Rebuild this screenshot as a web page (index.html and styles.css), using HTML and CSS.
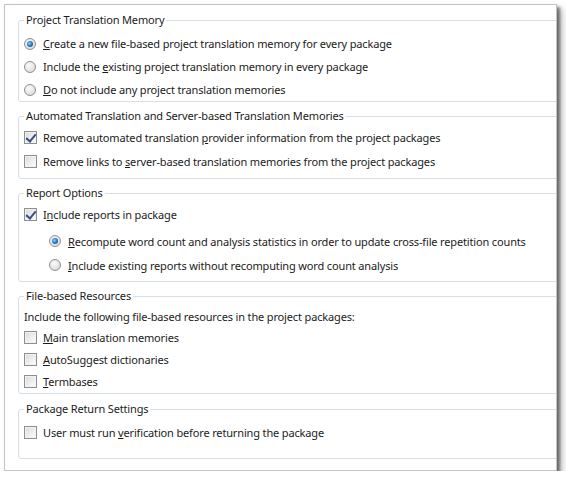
FILE: index.html
```html
<!DOCTYPE html>
<html lang="en">
<head>
  <meta charset="UTF-8">
  <title>Project Package Options</title>
  <link rel="stylesheet" href="styles.css">
</head>
<body>
  <div class="window">
    <fieldset class="group g1">
      <legend>Project Translation Memory</legend>
      <label class="opt"><span class="radio checked"></span><span><u>C</u>reate a new file-based project translation memory for every package</span></label>
      <label class="opt"><span class="radio"></span><span>Include the <u>e</u>xisting project translation memory in every package</span></label>
      <label class="opt"><span class="radio"></span><span><u>D</u>o not include any project translation memories</span></label>
    </fieldset>

    <fieldset class="group g2">
      <legend>Automated Translation and Server-based Translation Memories</legend>
      <label class="opt"><span class="check checked"></span><span>Remove automated translation <u>p</u>rovider information from the project packages</span></label>
      <label class="opt"><span class="check"></span><span>Remove links to <u>s</u>erver-based translation memories from the project packages</span></label>
    </fieldset>

    <fieldset class="group g3">
      <legend>Report Options</legend>
      <label class="opt"><span class="check checked"></span><span>I<u>n</u>clude reports in package</span></label>
      <div class="sub">
        <label class="opt"><span class="radio checked"></span><span><u>R</u>ecompute word count and analysis statistics in order to update cross-file repetition counts</span></label>
        <label class="opt"><span class="radio"></span><span><u>I</u>nclude existing reports without recomputing word count analysis</span></label>
      </div>
    </fieldset>

    <fieldset class="group g4">
      <legend>File-based Resources</legend>
      <div class="note">Include the following file-based resources in the project packages:</div>
      <label class="opt"><span class="check"></span><span><u>M</u>ain translation memories</span></label>
      <label class="opt"><span class="check"></span><span><u>A</u>utoSuggest dictionaries</span></label>
      <label class="opt"><span class="check"></span><span><u>T</u>ermbases</span></label>
    </fieldset>

    <fieldset class="group g5">
      <legend>Package Return Settings</legend>
      <label class="opt"><span class="check"></span><span>User must run <u>v</u>erification before returning the package</span></label>
    </fieldset>
  </div>
</body>
</html>
```

FILE: styles.css
```css
:root {
  --text: #1b1b1b;
  --line: #d5dfe5;
  --box: #8e8f8f;
}

* {
  box-sizing: border-box;
}

body {
  margin: 0;
  background: #fff;
  font-family: 'Noto Sans', 'Open Sans', sans-serif;
  font-size: 11px;
  letter-spacing: -0.15px;
  color: var(--text);
}

.window {
  margin: 4px 0 0 4px;
  width: 553px;
  height: 467px;
  border: 1px solid #c4c4c4;
  background: #fff;
  overflow: hidden;
  padding: 7px 0 0 13px;
  box-shadow: 3px 3px 3px rgba(0, 0, 0, 0.5), 6px 5px 8px rgba(0, 0, 0, 0.2);
}

.group {
  margin: 6px -30px 0 0;
  border: 1px solid var(--line);
  border-radius: 3px;
  padding: 0 0 0 5px;
  min-width: 0;
}

.group legend {
  padding: 0 2px;
  line-height: 16px;
}

.g1 { margin-top: 0; padding-top: 4px; }
.g2 { padding-top: 1px; padding-bottom: 5px; }
.g3 { padding-top: 2px; padding-bottom: 4px; }
.g4 { padding-top: 4px; padding-bottom: 1px; }
.g5 { margin-top: 7px; padding-top: 4px; padding-bottom: 15px; }

.opt {
  display: flex;
  align-items: center;
  height: 23px;
  white-space: nowrap;
}

.g2 .opt { height: 24px; }
.g4 .opt, .g5 .opt { height: 22px; }

.sub {
  margin-top: 3px;
  padding-left: 25px;
}

.sub .opt { height: 24px; }

.note {
  height: 18px;
  line-height: 18px;
}

.radio,
.check {
  flex: none;
  position: relative;
  width: 13px;
  height: 13px;
  margin-right: 6px;
  border: 1px solid var(--box);
}

.radio {
  width: 12px;
  height: 12px;
  margin-right: 7px;
  border-radius: 50%;
  background: radial-gradient(circle at 40% 35%, #fafafa 0%, #e6e6e6 55%, #cfcfcf 100%);
}

.radio.checked::after {
  content: "";
  position: absolute;
  left: 2px;
  top: 2px;
  width: 6px;
  height: 6px;
  border-radius: 50%;
  background: radial-gradient(circle at 40% 40%, #8fd4ff 0%, #2a80c8 45%, #0c3a6e 100%);
}

.check {
  background: linear-gradient(135deg, #d9d9d9 0%, #f4f4f4 70%, #fff 100%);
  box-shadow: inset 0 0 0 1px #f2f2f2;
}

.check.checked::after {
  content: "";
  position: absolute;
  left: 3px;
  top: 0px;
  width: 4px;
  height: 8px;
  border: solid #3a4f80;
  border-width: 0 2px 2px 0;
  transform: rotate(40deg);
}

u {
  text-decoration: underline;
  text-underline-offset: 1px;
}
```
